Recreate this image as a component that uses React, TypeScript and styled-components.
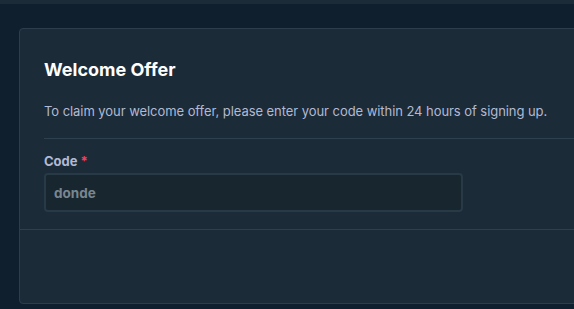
import React from "react";
import styled, { createGlobalStyle } from "styled-components";

const Global = createGlobalStyle`
  html, body {
    margin: 0;
    padding: 0;
    background: #0f212e;
    overflow: hidden;
  }
  body {
    font-family: Inter, "Noto Sans", sans-serif;
  }
`;

const Page = styled.div`
  width: 574px;
  height: 309px;
  overflow: hidden;
  background: #0f1f2d;
  display: flex;
  flex-direction: column;
`;

const TopBar = styled.div`
  height: 4px;
  flex: none;
  background: #1b2b38;
`;

const Card = styled.section`
  margin: 24px 0 0 19px;
  width: 640px;
  flex: none;
  height: 276px;
  box-sizing: border-box;
  background: #1c2b38;
  border: 1px solid #2c3d4b;
  border-radius: 4px;
  display: flex;
  flex-direction: column;
`;

const Header = styled.div`
  padding: 30px 0 0 24px;
  display: flex;
  flex-direction: column;
`;

const Title = styled.h2`
  margin: 0;
  font-size: 18px;
  line-height: 22px;
  font-weight: 700;
  color: #ffffff;
`;

const Description = styled.p`
  margin: 22px 0 0;
  font-size: 13px;
  line-height: 16px;
  letter-spacing: -0.06px;
  color: #b1bad3;
`;

const Divider = styled.hr<{ $inset?: boolean }>`
  margin: ${(p) => (p.$inset ? "19px 0 0" : "0")};
  border: none;
  height: 1px;
  flex: none;
  background: #2e404e;
`;

const Form = styled.div`
  padding: 14px 0 17px 24px;
  display: flex;
  flex-direction: column;
  gap: 4px;
`;

const Label = styled.label`
  font-size: 13px;
  line-height: 16px;
  font-weight: 700;
  color: #b1bad3;
`;

const Required = styled.span`
  color: #ed4163;
  margin-left: 3px;
`;

const Input = styled.input`
  box-sizing: border-box;
  width: 419px;
  height: 39px;
  padding: 0 8px;
  background: #18262f;
  border: 2px solid #293a47;
  border-radius: 4px;
  font-family: Inter, "Noto Sans", sans-serif;
  font-size: 13.5px;
  font-weight: 700;
  color: #7a868f;
  outline: none;
`;

const Footer = styled.div`
  flex: 1;
`;

export default function App() {
  return (
    <>
      <Global />
      <Page>
        <TopBar />
        <Card>
          <Header>
            <Title>Welcome Offer</Title>
            <Description>
              To claim your welcome offer, please enter your code within 24 hours of signing up.
            </Description>
            <Divider $inset />
          </Header>
          <Form>
            <Label htmlFor="code">
              Code<Required>*</Required>
            </Label>
            <Input id="code" defaultValue="donde" readOnly />
          </Form>
          <Divider />
          <Footer />
        </Card>
      </Page>
    </>
  );
}
